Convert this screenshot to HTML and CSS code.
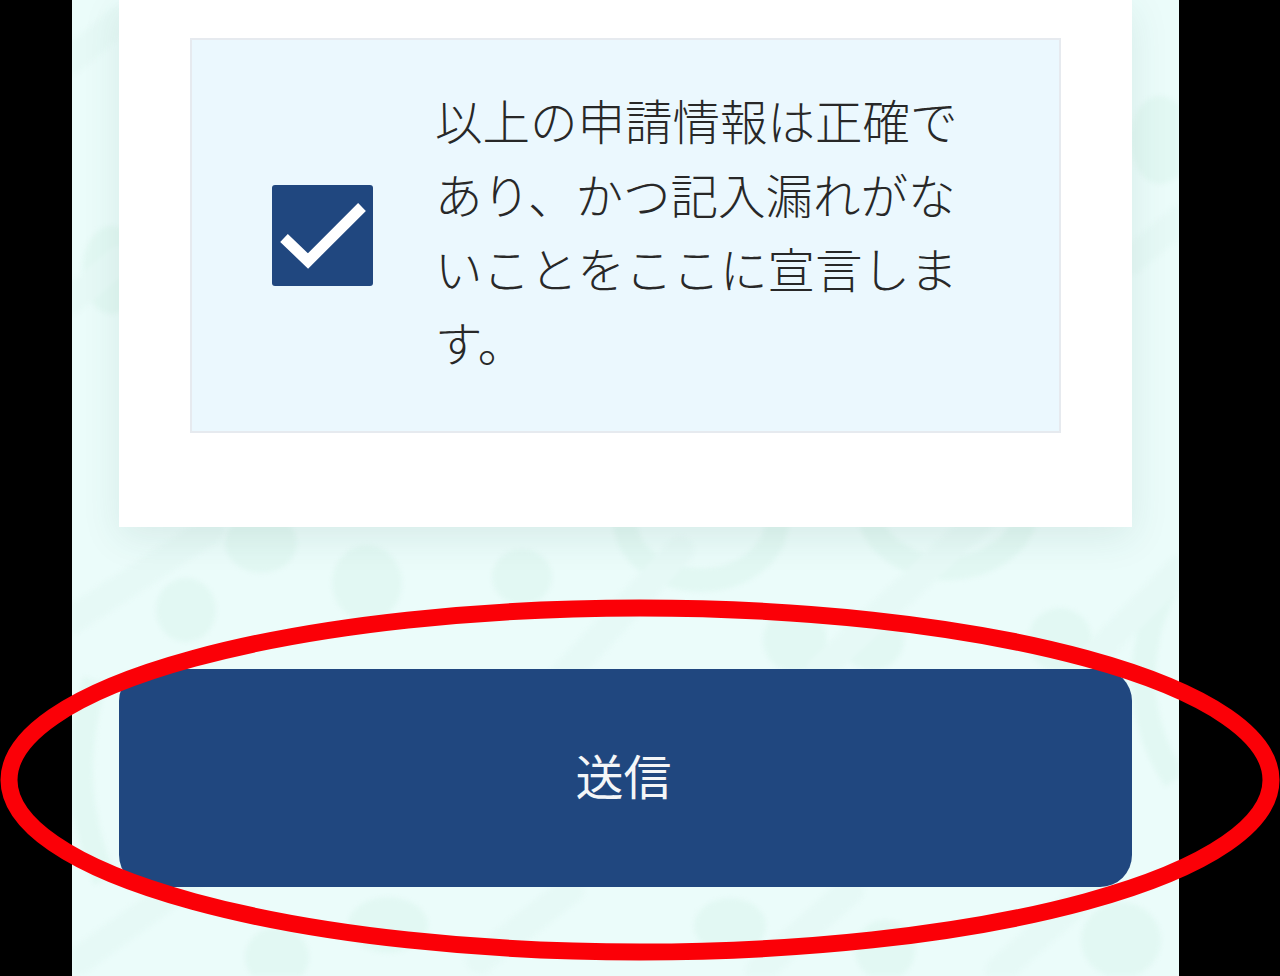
FILE: index.html
```html
<!DOCTYPE html>
<html lang="ja">
<head>
<meta charset="utf-8">
<title>送信</title>
<link rel="stylesheet" href="styles.css">
</head>
<body>
<main class="screen">
  <svg class="pattern" viewBox="72 0 1107 976" aria-hidden="true">
    <g class="blobs">
      <ellipse cx="261" cy="543" rx="36" ry="30"/>
      <ellipse cx="367" cy="583" rx="35" ry="38"/>
      <ellipse cx="522" cy="577" rx="30" ry="28"/>
      <ellipse cx="186" cy="610" rx="30" ry="32"/>
      <ellipse cx="795" cy="640" rx="32" ry="32"/>
      <ellipse cx="872" cy="640" rx="32" ry="30"/>
      <ellipse cx="1060" cy="640" rx="32" ry="32"/>
      <ellipse cx="388" cy="925" rx="40" ry="28"/>
      <ellipse cx="277" cy="957" rx="32" ry="30"/>
      <ellipse cx="1121" cy="940" rx="40" ry="38"/>
      <ellipse cx="730" cy="926" rx="36" ry="28"/>
      <ellipse cx="885" cy="950" rx="30" ry="30"/>
      <ellipse cx="112" cy="270" rx="30" ry="44"/>
      <ellipse cx="1160" cy="140" rx="30" ry="44"/>
    </g>
    <g class="rings">
      <path d="M625 520a76 60 0 0 0 152 0"/>
      <path d="M870 520a80 64 0 0 0 155 0"/>
      <path d="M1165 590c-30 60-30 130 10 190"/>
      <path d="M95 680c-20 70-20 130 10 200"/>
    </g>
    <g class="bands">
      <path d="M72 620L210 530"/>
      <path d="M560 680L680 550"/>
      <path d="M820 670L980 520"/>
      <path d="M1090 660L1179 570"/>
      <path d="M80 960L190 880"/>
      <path d="M480 960L570 890"/>
      <path d="M760 970L850 890"/>
      <path d="M1000 970L1090 890"/>
      <path d="M72 300L119 260"/>
      <path d="M72 60L119 20"/>
      <path d="M1132 260L1179 220"/>
    </g>
  </svg>

  <section class="card">
    <div class="declaration">
      <span class="checkbox">
        <svg viewBox="0 0 101 101" aria-hidden="true"><path d="M12 53L36 76L90 22"/></svg>
      </span>
      <p class="declaration-text">以上の申請情報は正確であり、かつ記入漏れがないことをここに宣言します。</p>
    </div>
  </section>

  <button class="submit" type="button">送信</button>
</main>

<svg class="annotation" viewBox="0 0 1280 976" aria-hidden="true">
  <ellipse cx="640" cy="780" rx="631" ry="172"/>
</svg>
</body>
</html>
```

FILE: styles.css
```css
* {
  box-sizing: border-box;
}

html,
body {
  margin: 0;
  height: 976px;
  overflow: hidden;
  background: #000;
  font-family: "Noto Sans CJK JP", "Noto Sans", sans-serif;
}

body {
  position: relative;
}

.screen {
  position: relative;
  width: 1107px;
  height: 976px;
  margin-left: 72px;
  padding: 0 47px;
  overflow: hidden;
  background: #ebfcfa;
}

.pattern {
  position: absolute;
  inset: 0;
  width: 1107px;
  height: 976px;
  filter: blur(2px);
}

.blobs {
  fill: #e2f8f3;
}

.rings {
  fill: none;
  stroke: #e2f8f3;
  stroke-width: 24;
}

.bands {
  fill: none;
  stroke: #e6f9f6;
  stroke-width: 28;
  stroke-linecap: round;
}

.card {
  position: relative;
  height: 527px;
  padding: 38px 71px 0;
  background: #fff;
  box-shadow: 0 10px 36px rgba(40, 90, 80, 0.1);
}

.declaration {
  display: flex;
  align-items: center;
  gap: 62px;
  height: 395px;
  padding: 0 60px 0 80px;
  background: #ebf8fe;
  border: 2px solid #e6eaef;
}

.checkbox {
  flex: none;
  width: 101px;
  height: 101px;
  background: #20477f;
  border-radius: 3px;
}

.checkbox svg {
  display: block;
  width: 101px;
  height: 101px;
}

.checkbox path {
  fill: none;
  stroke: #fff;
  stroke-width: 11;
}

.declaration-text {
  margin: 0;
  width: 535px;
  padding-bottom: 9px;
  font-size: 47.5px;
  font-weight: 300;
  line-height: 74px;
  color: #282828;
}

.submit {
  position: relative;
  display: block;
  width: 100%;
  height: 218px;
  margin-top: 142px;
  padding: 0 4px 8px 0;
  border: 0;
  border-radius: 32px;
  background: #20477f;
  color: #f4f6f8;
  font-family: inherit;
  font-size: 48px;
  font-weight: 400;
}

.annotation {
  position: absolute;
  top: 0;
  left: 0;
  width: 1280px;
  height: 976px;
  pointer-events: none;
}

.annotation ellipse {
  fill: none;
  stroke: #fb0007;
  stroke-width: 17;
}
```
